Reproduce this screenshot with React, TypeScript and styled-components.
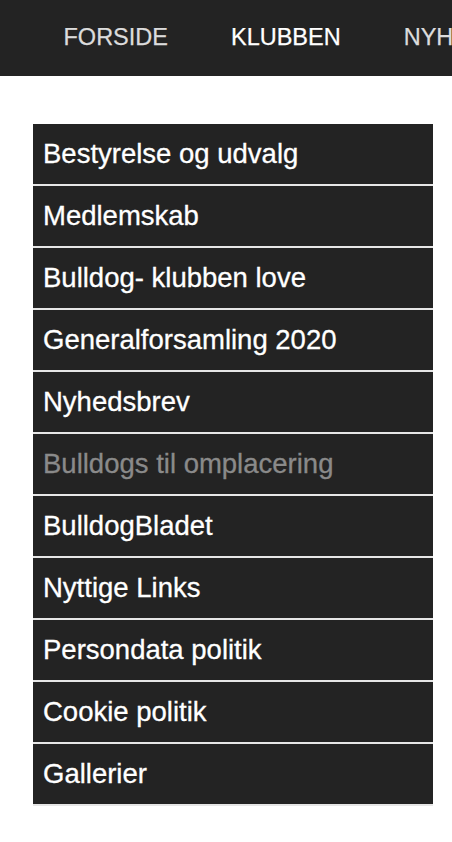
import React from "react";
import styled, { createGlobalStyle } from "styled-components";

const Global = createGlobalStyle`
  html, body { margin: 0; padding: 0; background: #fff; overflow: hidden; }
  body { font-family: "Liberation Sans", Arial, Helvetica, sans-serif; }
`;

const TopBar = styled.nav`
  height: 76px;
  background: #232323;
  display: flex;
  align-items: center;
  padding-left: 32px;
  white-space: nowrap;
  overflow: hidden;
`;

const TopLink = styled.a<{ $active?: boolean }>`
  flex: none;
  padding: 0 31.5px;
  font-size: 23.5px;
  line-height: 1;
  color: ${(p) => (p.$active ? "#ffffff" : "#dcdcdc")};
  -webkit-text-stroke: 0.25px currentColor;
  text-decoration: none;
  text-transform: uppercase;
`;

const Side = styled.ul`
  list-style: none;
  margin: 48px 0 0 33px;
  padding: 0;
  width: 400px;
`;

const Item = styled.li<{ $muted?: boolean }>`
  height: 60px;
  border-bottom: 2px solid #e6e6e6;
  background: #232323;
  display: flex;
  align-items: center;
  padding-left: 10px;
  font-size: 27.5px;
  color: ${(p) => (p.$muted ? "#8a8a8a" : "#ffffff")};
  -webkit-text-stroke: 0.3px currentColor;
  white-space: nowrap;
`;

const items: { label: string; muted?: boolean }[] = [
  { label: "Bestyrelse og udvalg" },
  { label: "Medlemskab" },
  { label: "Bulldog- klubben love" },
  { label: "Generalforsamling 2020" },
  { label: "Nyhedsbrev" },
  { label: "Bulldogs til omplacering", muted: true },
  { label: "BulldogBladet" },
  { label: "Nyttige Links" },
  { label: "Persondata politik" },
  { label: "Cookie politik" },
  { label: "Gallerier" },
];

export default function App() {
  return (
    <>
      <Global />
      <TopBar>
        <TopLink>Forside</TopLink>
        <TopLink $active>Klubben</TopLink>
        <TopLink>Nyheder</TopLink>
      </TopBar>
      <Side>
        {items.map((it) => (
          <Item key={it.label} $muted={it.muted}>
            {it.label}
          </Item>
        ))}
      </Side>
    </>
  );
}
